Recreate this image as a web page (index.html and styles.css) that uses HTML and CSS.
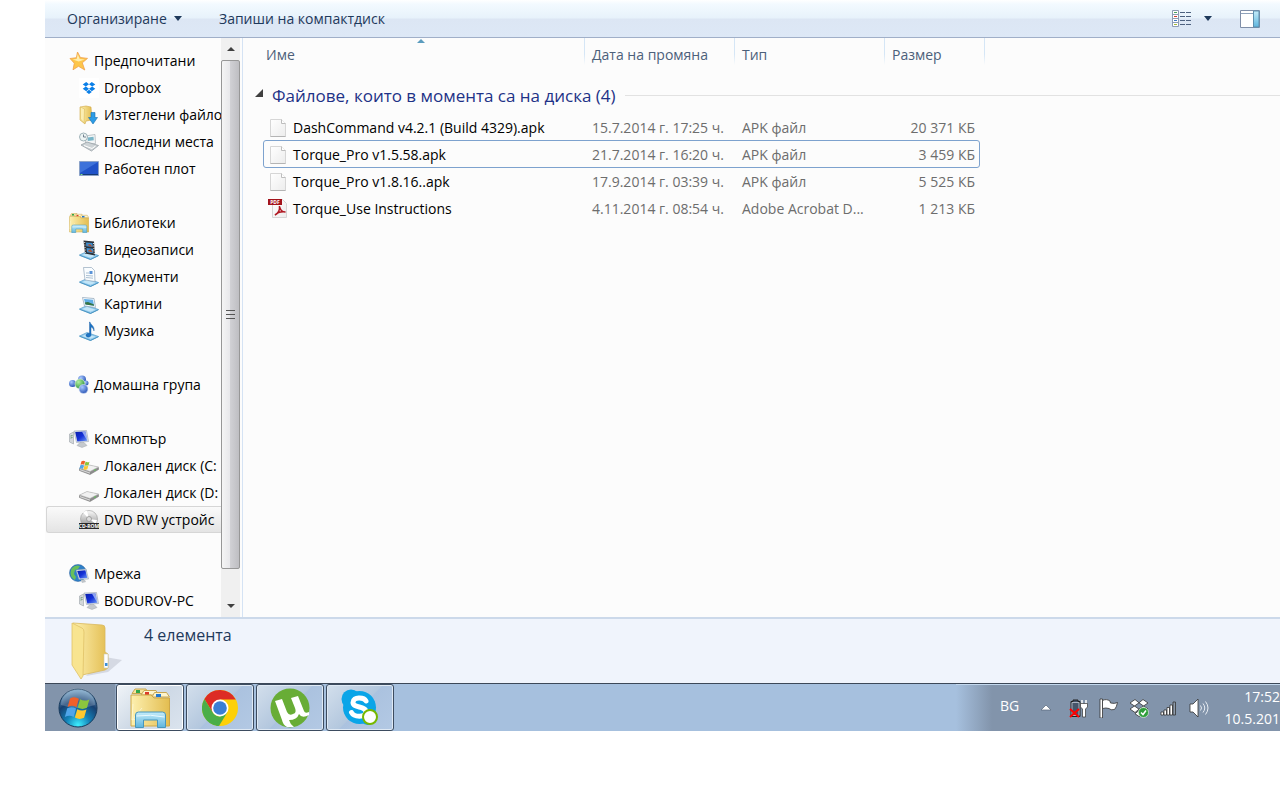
FILE: index.html
```html
<!DOCTYPE html>
<html lang="bg">
<head>
  <meta charset="UTF-8">
  <meta name="viewport" content="width=device-width, initial-scale=1.0">
  <title>DVD RW устройство</title>
  <link rel="stylesheet" href="styles.css">
</head>
<body>
  <!-- shared icons -->
  <svg class="defs" aria-hidden="true">
    <defs>
      <linearGradient id="gold" x1="0" x2="1"><stop offset="0" stop-color="#fdf0b0"/><stop offset="1" stop-color="#e3bd50"/></linearGradient>
      <linearGradient id="screen-blue" x1="0" y1="0" x2="1" y2="1"><stop offset="0" stop-color="#0a1fa8"/><stop offset="0.5" stop-color="#1430d8"/><stop offset="1" stop-color="#6f9cf5"/></linearGradient>
      <linearGradient id="glass" x1="0" y1="0" x2="0" y2="1"><stop offset="0" stop-color="#c5ecfa"/><stop offset="1" stop-color="#5eb5dd"/></linearGradient>
      <linearGradient id="paper" x1="0" y1="0" x2="1" y2="1"><stop offset="0" stop-color="#ffffff"/><stop offset="1" stop-color="#ececec"/></linearGradient>
      <linearGradient id="metal" x1="0" y1="0" x2="0" y2="1"><stop offset="0" stop-color="#fafafa"/><stop offset="1" stop-color="#8c8c8c"/></linearGradient>
      <radialGradient id="orb" cx="0.5" cy="0.95" r="0.9"><stop offset="0" stop-color="#3ff0ff"/><stop offset="0.35" stop-color="#1382b8"/><stop offset="0.7" stop-color="#173f70"/><stop offset="1" stop-color="#6f9cc0"/></radialGradient>
      <radialGradient id="ball-blue" cx="0.35" cy="0.3" r="0.8"><stop offset="0" stop-color="#a9c8ff"/><stop offset="1" stop-color="#1e4bb0"/></radialGradient>
      <radialGradient id="ball-green" cx="0.35" cy="0.3" r="0.8"><stop offset="0" stop-color="#b4f0a0"/><stop offset="1" stop-color="#1d8a35"/></radialGradient>
    </defs>
    <symbol id="file" viewBox="0 0 20 20">
      <path d="M2.500 1.500h11l4 4v13h-15z" fill="url(#paper)" stroke="#d6d6d6"/>
      <path d="M13.500 1.500v4h4" fill="#fff" stroke="#bdbdbd"/>
      <path d="M2.500 18.500h15" stroke="#b4b4b4"/>
    </symbol>
    <symbol id="tray-base" viewBox="0 0 20 20">
      <path d="M0.500 15 8 11.500l11.500 4-8 4z" fill="#8fc8ec" stroke="#5a9fcb" stroke-width="0.700"/>
      <path d="M3 15l5-2 8.500 2.700-5 2z" fill="#c3e6f8"/>
      <path d="M0.500 15.300l11 4.200 8-3.800" fill="none" stroke="#3e8ebe" stroke-width="0.800"/>
    </symbol>
    <symbol id="computer" viewBox="0 0 20 20">
      <path d="M0.500 5l4-2v12l-4-2z" fill="#d3d7da" stroke="#9ca3aa" stroke-width="0.600"/>
      <path d="M1.500 7l2-.5M1.500 9l2-.5" stroke="#4c8a56" stroke-width="0.800"/>
      <path d="M5 2 17.500 1.500l2 11-12 1z" fill="#dfe5ec" stroke="#98a3b0" stroke-width="0.600"/>
      <path d="M6.200 3l10.300-.5 1.800 9.200-10 .8z" fill="url(#screen-blue)"/>
      <path d="M13 2.700l3.500-.2 1.800 9.200z" fill="#b7caf8" opacity="0.750"/>
      <path d="M11 13.500h4l3 3-5 2-5-2z" fill="#c5c9cd" stroke="#a2a6aa" stroke-width="0.500"/>
    </symbol>
    <symbol id="disk" viewBox="0 0 20 20">
      <path d="M0.500 12.500 8 9l11.500 2.500v2L11 18.500.5 14.500z" fill="#8d8d8d" stroke="#7a7a7a" stroke-width="0.600"/>
      <path d="M0.500 12 8 8.500l11.500 2.500-8.500 4.500z" fill="#f1f1f1" stroke="#b4b4b4" stroke-width="0.600"/>
      <path d="M1 13l10 3.500v1.200l-10-3.500z" fill="#d5d5d5"/>
      <circle cx="16" cy="14" r="0.800" fill="#54d14c"/>
    </symbol>
    <symbol id="windows-flag" viewBox="0 0 24 24">
      <path d="M5 4.500c2.500-1.500 4.800-1.300 7.300.2l-2 7c-2.500-1.500-4.800-1.400-7.300-.1z" fill="#f0602a"/>
      <path d="M13.300 5.200c2.500 1.400 4.800 1.500 7.700.1l-2 7c-2.800 1.300-5 1.200-7.600-.2z" fill="#8cc63e"/>
      <path d="M2.700 12.700c2.500-1.400 4.900-1.300 7.300.2l-2 6.900c-2.500-1.500-4.800-1.300-7.300 0z" fill="#50a5ea"/>
      <path d="M11 13.400c2.500 1.400 4.900 1.500 7.600.2l-2 6.900c-2.700 1.300-5 1.200-7.600-.2z" fill="#fdc82f"/>
    </symbol>
    <symbol id="explorer" viewBox="0 0 40 40">
      <path d="M2 5.500 5 1h11l2 4.500z" fill="#f7e49e" stroke="#c9a752"/>
      <path d="M11 7l3-4.500h12L28 7z" fill="#fdf4cd" stroke="#c9a752"/>
      <path d="M22 9l2.500-4.500h12l3 4.500z" fill="#fdf4cd" stroke="#c9a752"/>
      <path d="M6 2h4v3H6z" fill="#30a64a"/><path d="M15 4h4v3h-4z" fill="#dd3a28"/><path d="M26 6h5v3h-5z" fill="#2378d0"/>
      <path d="M1 7h20l3 3h15.500v28H1z" fill="url(#gold)" stroke="#cda849"/>
      <path d="M2 32 12 20M2 32l16-4M2 32l1-16" stroke="#fffbe0" opacity="0.700"/>
      <path d="M5.500 39.500V27a3 3 0 0 1 3-3h24a3 3 0 0 1 3 3v12.500h-8V32h-14v7.500z" fill="url(#glass)" stroke="#4796bd"/>
      <path d="M6.500 28q14-2 28 1" stroke="#e9faff" fill="none"/>
    </symbol>
    <symbol id="dropbox" viewBox="0 0 20 20">
      <path d="M6 1.500 1 5l4.500 3L10 4.800zM14 1.500 10 4.800 14.500 8 19 5zM1 11l5 3.500 4-3.300L5.500 8zM19 11l-5 3.500-4-3.300L14.500 8zM10 12.500l-4 3.200 4 2.800 4-2.800z"/>
    </symbol>
  </svg>

  <div class="desktop">
    <header class="toolbar">
      <button class="tool organize">Организиране <span class="caret"></span></button>
      <button class="tool">Запиши на компактдиск</button>
      <div class="tool-icons">
        <button class="icon-btn" aria-label="Изглед">
          <svg width="20" height="17" viewBox="0 0 20 17">
            <path d="M.5.5h6v16h-6z" fill="#fff" stroke="#8d9bb3"/>
            <path d="M0 4.500h7M0 8.500h7M0 12.500h7" stroke="#8d9bb3"/>
            <path d="M2 2.500h3" stroke="#4aa35c"/><path d="M2 6.500h3" stroke="#cf3b30"/><path d="M2 10.500h3" stroke="#3e79c4"/><path d="M2 14.500h3" stroke="#a5b93a"/>
            <path d="M8 2.500h5m1 0h5M8 6.500h5m1 0h5M8 10.500h5m1 0h5M8 14.500h5m1 0h5" stroke="#4d617f"/>
          </svg>
        </button>
        <button class="icon-btn" aria-label="Още опции"><span class="caret big"></span></button>
        <button class="icon-btn pane" aria-label="Визуализация">
          <svg width="20" height="18" viewBox="0 0 20 18">
            <path d="M.5.5h19v17H.5z" fill="#fff" stroke="#7f8ea8"/>
            <path d="M1 3.500h12" stroke="#8fa2bb"/>
            <path d="M13.500 1h5.500v16h-5.500z" fill="url(#glass)" stroke="#5d8fae"/>
          </svg>
        </button>
      </div>
    </header>

    <div class="content">
      <nav class="sidebar">
        <div class="tree">
          <div class="group">
            <a href="#" class="root"><svg viewBox="0 0 20 20"><path d="M8.500 1l2.900 5.500 7.100.9-5.200 4.400 2.500 7.200-6.300-3.700-5.500 3.500 1.300-6.600L1 7.500l6.400-.8z" fill="#fdc64a" stroke="#f0a04a" stroke-width="0.800"/><path d="M8.700 3l2 5 5 .5-6 2-6-2 4-.5z" fill="#ffeeb0"/></svg>Предпочитани</a>
            <a href="#"><svg viewBox="0 0 20 20" fill="#0a7fe8"><path fill="#fff" d="M0 0h20v20H0z"/><use href="#dropbox" x="3" y="3" width="14" height="14"/></svg>Dropbox</a>
            <a href="#"><svg viewBox="0 0 20 20"><path d="M1 2l6-1 5 1 1 13-6 1-1 3-5-4z" fill="url(#gold)" stroke="#d1a844" stroke-width="0.600"/><path d="M1.500 2l4 2-.5 14-3.500-4z" fill="#fbeeb2" stroke="#d8b552" stroke-width="0.500"/><path d="M12 7.500h4v5h2.500L14 19l-4.500-6.500H12z" fill="#2b9be6" stroke="#1770b0" stroke-width="0.600"/></svg>Изтеглени файло</a>
            <a href="#"><svg viewBox="0 0 20 20"><path d="M6 4l10-1.500.5 9L7 13z" fill="#f3f6f7" stroke="#a6afb4" stroke-width="0.700"/><path d="M8.500 5.500l6-.8.3 3.500-6 .8z" fill="#79b5c8"/><path d="M2 13l6-3 11.500 3.500-7 5.500z" fill="#cdd3d6" stroke="#8d979c" stroke-width="0.700"/><path d="M5 13.500l8 3 3.500-2.500" fill="none" stroke="#fff"/><circle cx="4.500" cy="5" r="4" fill="#edf4f4" stroke="#9fb2b8"/><path d="M4.500 2.500V5H7" fill="none" stroke="#567" stroke-width="0.800"/></svg>Последни места</a>
            <a href="#"><svg viewBox="0 0 20 20"><path d="M.5 2.500h19v14H.5z" fill="#2052c8" stroke="#8ba2c8"/><path d="M1 3h18L1 14z" fill="#3d72da"/><path d="M1 15.500h18" stroke="#163a75" stroke-width="1"/><path d="M1.500 15.500h2" stroke="#7be08a"/></svg>Работен плот</a>
          </div>
          <div class="group">
            <a href="#" class="root"><svg viewBox="0 0 20 20"><use href="#explorer"/></svg>Библиотеки</a>
            <a href="#"><svg viewBox="0 0 20 20"><use href="#tray-base"/><path d="M4.500.5 15 1.500l1 14-10-2z" fill="#2d3238"/><path d="M7 2.500l6.500.6.3 4-6.500-.8zM7.500 8l6.500.8.3 4.500-6.300-1z" fill="#3e8fd0"/><path d="M8 5l3-1 3 3zM8.500 11l3-2 2.500 3.500z" fill="#b5522e"/><path d="M5.700 2l.6 11M14.500 3l.8 11" stroke="#eee" stroke-dasharray="1 1.500"/></svg>Видеозаписи</a>
            <a href="#"><svg viewBox="0 0 20 20"><use href="#tray-base"/><path d="M4.500.5h8l3 3 .5 11-10-1.500z" fill="#fafdff" stroke="#93a7bb" stroke-width="0.700"/><path d="M7 6h3M7 8.500l7 .5M7 10.500l7 .7" stroke="#8aa5bd" stroke-width="0.700"/><path d="M10.500 4h3v3h-3z" fill="#5b93d8"/></svg>Документи</a>
            <a href="#"><svg viewBox="0 0 20 20"><use href="#tray-base"/><path d="M3.500 3.500 15 4.500l1.500 9-11-1.500z" fill="#f5fbff" stroke="#8aa1b5" stroke-width="0.700"/><path d="M5 5l9 .8 1 6-8.500-1.200z" fill="#60aee8"/><path d="M5.800 8.500 9 8l6 2.500v1.300l-8.500-1.200z" fill="#367443"/></svg>Картини</a>
            <a href="#"><svg viewBox="0 0 20 20"><use href="#tray-base"/><path d="M11 1c.5 3 5 4 4 9-.5-3-2-3.500-3-4v8.500c-1 2.500-5.500 2-5-.5.500-1.500 2-2 3.500-1.500V1z" fill="#1e74c4" stroke="#1559a0" stroke-width="0.400"/></svg>Музика</a>
          </div>
          <div class="group">
            <a href="#" class="root"><svg viewBox="0 0 20 20"><circle cx="3.500" cy="8.500" r="3.500" fill="url(#ball-blue)"/><circle cx="13" cy="4.500" r="4" fill="url(#ball-blue)"/><circle cx="17" cy="8" r="2.500" fill="url(#ball-blue)"/><circle cx="11" cy="9" r="5" fill="url(#ball-green)" stroke="#e9f3e9" stroke-width="0.600"/><circle cx="14.500" cy="14" r="4.500" fill="url(#ball-blue)" stroke="#dfe8fa" stroke-width="0.600"/></svg>Домашна група</a>
          </div>
          <div class="group">
            <a href="#" class="root"><svg viewBox="0 0 20 20"><use href="#computer"/></svg>Компютър</a>
            <a href="#"><svg viewBox="0 0 20 20"><use href="#disk"/><use href="#windows-flag" x="0" y="3" width="12" height="12"/></svg>Локален диск (C:</a>
            <a href="#"><svg viewBox="0 0 20 20"><use href="#disk"/></svg>Локален диск (D:</a>
            <a href="#" class="selected"><svg viewBox="0 0 20 20"><circle cx="10" cy="9" r="8.500" fill="url(#metal)" stroke="#9a9a9a" stroke-width="0.600"/><path d="M10 9 4 2.500A9 9 0 0 1 8 .8zM10 9l7 5 1-4z" fill="#fff"/><circle cx="10" cy="9" r="2.500" fill="#ddd" stroke="#888" stroke-width="0.700"/><path d="M0 13h20v6H0z" fill="#2a2a2a"/><text x="10" y="18" class="cd-label" text-anchor="middle">CD-ROM</text></svg>DVD RW устройс</a>
          </div>
          <div class="group">
            <a href="#" class="root"><svg viewBox="0 0 20 20"><circle cx="9" cy="9" r="8.500" fill="#2e7fc8" stroke="#235d9a" stroke-width="0.500"/><path d="M3 4c3-3 6-3 8-2l-2 3-3 1-1 4 2 3-1 3C2 14 0 9 3 4z" fill="#68bf5a"/><path d="M7 6l10-1 2.500 10-9.500.5z" fill="#dce3ea" stroke="#8999a8" stroke-width="0.500"/><path d="M8.200 7l8.200-.8L18.300 14l-7.500.4z" fill="url(#screen-blue)"/><path d="M12 16h4l1 2-4 1z" fill="#bfc4c8"/></svg>Мрежа</a>
            <a href="#"><svg viewBox="0 0 20 20"><use href="#computer"/></svg>BODUROV-PC</a>
          </div>
        </div>
        <div class="scrollbar">
          <button class="scroll-btn up" aria-label="Нагоре"></button>
          <div class="thumb"><span></span><span></span><span></span></div>
          <button class="scroll-btn down" aria-label="Надолу"></button>
        </div>
      </nav>

      <main class="files">
        <table>
          <colgroup>
            <col class="col-name"><col class="col-date"><col class="col-type"><col class="col-size"><col>
          </colgroup>
          <thead>
            <tr>
              <th class="name sorted">Име</th>
              <th>Дата на промяна</th>
              <th>Тип</th>
              <th>Размер</th>
              <td></td>
            </tr>
          </thead>
          <tbody>
            <tr class="group-row">
              <th colspan="5"><div class="group-title"><span class="expander"></span>Файлове, които в момента са на диска (4)</div></th>
            </tr>
            <tr>
              <td class="name"><svg viewBox="0 0 20 20"><use href="#file"/></svg>DashCommand v4.2.1 (Build 4329).apk</td>
              <td>15.7.2014 г. 17:25 ч.</td>
              <td>APK файл</td>
              <td class="size">20 371 КБ</td>
            </tr>
            <tr class="focused">
              <td class="name"><svg viewBox="0 0 20 20"><use href="#file"/></svg>Torque_Pro v1.5.58.apk</td>
              <td>21.7.2014 г. 16:20 ч.</td>
              <td>APK файл</td>
              <td class="size">3 459 КБ</td>
            </tr>
            <tr>
              <td class="name"><svg viewBox="0 0 20 20"><use href="#file"/></svg>Torque_Pro v1.8.16..apk</td>
              <td>17.9.2014 г. 03:39 ч.</td>
              <td>APK файл</td>
              <td class="size">5 525 КБ</td>
            </tr>
            <tr>
              <td class="name"><svg viewBox="0 0 20 20"><path d="M4.500.5h10l4 4v14h-14z" fill="url(#paper)" stroke="#d6d6d6"/><path d="M0 0h14v6H0z" fill="#a3141c"/><text x="7" y="5" class="pdf-label" text-anchor="middle">PDF</text><path d="M7 16c2-1 5-4 4.500-9 .5 4 2.500 6 6 6-4-.5-8 .5-10.500 3z" fill="none" stroke="#b01822" stroke-width="1.500"/></svg>Torque_Use Instructions</td>
              <td>4.11.2014 г. 08:54 ч.</td>
              <td>Adobe Acrobat D...</td>
              <td class="size">1 213 КБ</td>
            </tr>
          </tbody>
        </table>
      </main>
    </div>

    <section class="details">
      <svg width="54" height="58" viewBox="0 0 54 58">
        <path d="M34 35l17 3-14 12-22 4z" fill="#b9bec9" opacity="0.500"/>
        <path d="M2 1l29 2q3 0 3 3v24l3 2v14l-3 2-23 5z" fill="url(#gold)" stroke="#d9b95e" stroke-width="0.800"/>
        <path d="M33 32h4v14h-4z" fill="#fff" stroke="#c9c9b9" stroke-width="0.600"/><path d="M34 41h2.500v3H34z" fill="#3b8ed8"/>
        <path d="M1 1l10 5q2 1 2 4l-1 44-2 3-9-14z" fill="#f8e490" stroke="#dfc167" stroke-width="0.800"/>
      </svg>
      <p>4 елемента</p>
    </section>

    <footer class="taskbar">
      <button class="start" aria-label="Старт">
        <svg width="40" height="40" viewBox="0 0 40 40"><circle cx="20" cy="20" r="19" fill="url(#orb)" stroke="#173a5c"/><path d="M3 17a17 17 0 0 1 34 0q-17 6-34 0z" fill="#fff" opacity="0.200"/><use href="#windows-flag" x="6" y="5" width="29" height="29"/></svg>
      </button>
      <button class="task active" aria-label="Explorer"><svg width="40" height="40"><use href="#explorer"/></svg></button>
      <button class="task" aria-label="Chrome">
        <svg width="36" height="36" viewBox="0 0 36 36">
          <circle cx="18" cy="18" r="18" fill="#fdd008"/>
          <path d="M18 9.500h15.800A18 18 0 0 0 2.400 9l8.200 13.300z" fill="#dd2c25"/>
          <path d="M2.400 9 10.600 22.300q3 4.500 8 4.200L16 36A18 18 0 0 1 2.400 9z" fill="#4aae48"/>
          <path d="M25.400 22.300 17 36l-3-.5 4-9z" fill="#4aae48"/>
          <circle cx="18" cy="18" r="8.500" fill="#fff"/><circle cx="18" cy="18" r="6.800" fill="#3a7fd5"/>
        </svg>
      </button>
      <button class="task" aria-label="uTorrent">
        <svg width="40" height="40" viewBox="0 0 40 40">
          <circle cx="20" cy="20" r="19.500" fill="#68ad36"/>
          <path d="M5 13l7-2 5 13q2 4 6 2 4-1 2-6L21 10l7-2 6 15q1 3 5 1l0 3q-7 4-10-1-2 6-10 6 1 4 5 7l-7 0q-4-2-5-7z" fill="#fff"/>
        </svg>
      </button>
      <button class="task" aria-label="Skype">
        <svg width="40" height="40" viewBox="0 0 40 40">
          <circle cx="19.500" cy="19.500" r="16.500" fill="#0aa5e8"/><circle cx="11" cy="11" r="9.500" fill="#0aa5e8"/><circle cx="28" cy="28" r="9" fill="#0aa5e8"/>
          <path d="M26 13c-2-4-13-4.500-13 1.500 0 6 13 3 13 9.500 0 5.500-12 5.500-14.500.5" fill="none" stroke="#fff" stroke-width="5" stroke-linecap="round"/>
          <circle cx="30" cy="29" r="7" fill="#fff" stroke="#77b800" stroke-width="2"/>
        </svg>
      </button>
      <div class="tray">
        <span class="lang">BG</span>
        <div class="tray-icons">
          <svg viewBox="0 0 20 20"><path d="M2 12l5-5 5 5z" fill="#fff" stroke="#56657a" stroke-width="0.700"/></svg>
          <svg viewBox="0 0 20 20"><path d="M2 3.500h2V2h5v1.500h2v15H2z" fill="#46556a" stroke="#222"/><path d="M3 4.500h7v13H3z" fill="none" stroke="#aab4c0"/><path d="M13 2v4M17 2v4" stroke="#fff" stroke-width="1.500"/><path d="M11.500 5.500h7V9l-2 2v8h-3v-8l-2-2z" fill="#fff" stroke="#333" stroke-width="0.700"/><path d="M1 11l9 8M10 11l-9 8" stroke="#f00" stroke-width="2"/></svg>
          <svg viewBox="0 0 20 20"><path d="M1 1h2.500v19H1z" fill="#fff" stroke="#333" stroke-width="0.800"/><path d="M3.500 2.500c3-1.500 5-1 7.500.5l.5 2q4 1 7-.500-1 5-3 7-4 1-5.500-1-3-1-6.500 0z" fill="#fff" stroke="#333" stroke-width="0.800"/></svg>
          <svg viewBox="0 0 20 20"><use href="#dropbox" fill="#fff" stroke="#333" stroke-width="0.800"/><circle cx="14.500" cy="14.500" r="5" fill="#2f9e3a" stroke="#dff0df" stroke-width="0.700"/><path d="M12 14.500l2 2 3-4" fill="none" stroke="#fff" stroke-width="1.500"/></svg>
          <svg viewBox="0 0 20 20"><g fill="#fff" stroke="#333" stroke-width="0.800"><path d="M2 14h2.500v3H2zM5 12h2.500v5H5zM8 9.500h2.500V17H8zM11 7h2.500v10H11z"/><path d="M14 4h2.500v13H14z" fill="#8d9aaa"/></g></svg>
          <svg viewBox="0 0 20 20"><path d="M1 6h3l5-5v18l-5-5H1z" fill="#fff" stroke="#333" stroke-width="0.800"/><path d="M11.500 7.500q2 2.500 0 5M14 5.500q3.500 4.500 0 9M16.500 3.500q5 6.500 0 13" fill="none" stroke="#e8edf3"/></svg>
        </div>
        <div class="clock"><time>17:52</time><span>10.5.201</span></div>
      </div>
    </footer>
  </div>
</body>
</html>
```
FILE: styles.css
```css
*,
*::before,
*::after {
  box-sizing: border-box;
}

body {
  margin: 0;
  background: #fff;
  color: #000;
  font-family: "Open Sans", "Noto Sans", sans-serif;
  font-size: 14px;
  line-height: 27px;
}

button {
  font: inherit;
  color: inherit;
  background: none;
  border: none;
  padding: 0;
  margin: 0;
}

svg {
  flex: none;
  display: block;
}

.defs {
  position: absolute;
  width: 0;
  height: 0;
}

.desktop {
  margin-left: 45px;
  overflow: hidden;
}

/* toolbar */
.toolbar {
  display: flex;
  align-items: center;
  height: 38px;
  padding: 0 20px 0 22px;
  border-bottom: 1px solid #a0afc8;
  background: linear-gradient(#fff, #f3faff 4px, #e7f2fb 18px, #dce6f4 19px, #dde8f6 36px);
  color: #1e395b;
}

.organize {
  width: 152px;
  display: flex;
  align-items: center;
  gap: 7px;
}

.caret {
  border: 4px solid transparent;
  border-top: 5px solid #1e395b;
  border-bottom: none;
}

.caret.big {
  display: block;
}

.tool-icons {
  display: flex;
  align-items: center;
  gap: 12px;
  margin-left: auto;
}

.pane {
  margin-left: 16px;
}

/* content */
.content {
  display: flex;
  background: #fcfcfc;
}

.sidebar {
  display: flex;
  flex: none;
  width: 198px;
  border-right: 1px solid #d5e3f4;
}

.tree {
  flex: 1;
  min-width: 0;
  padding: 9px 0 3px 1px;
}

.group + .group {
  margin-top: 27px;
}

.tree a {
  display: flex;
  align-items: center;
  gap: 5px;
  height: 27px;
  padding-left: 33px;
  border-radius: 3px 0 0 3px;
  color: #000;
  text-decoration: none;
  white-space: nowrap;
  overflow: hidden;
}

.tree a.root {
  padding-left: 23px;
}

.tree a.selected {
  padding-left: 32px;
  border: 1px solid #d6d6d6;
  border-right: none;
  background: linear-gradient(#fafafa, #e4e4e4);
}

.tree svg,
.name svg,
.tray-icons svg {
  width: 20px;
  height: 20px;
}

.cd-label,
.pdf-label {
  font-size: 5px;
  font-weight: bold;
  fill: #fff;
}

.scrollbar {
  display: flex;
  flex-direction: column;
  width: 19px;
  margin-right: 2px;
  background: #f0f0f0;
}

.scroll-btn {
  display: flex;
  align-items: center;
  justify-content: center;
  height: 22px;
}

.scroll-btn::after {
  content: "";
  border: 4px solid transparent;
}

.up::after {
  border-top: none;
  border-bottom-color: #404040;
}

.down::after {
  border-bottom: none;
  border-top-color: #404040;
}

.thumb {
  display: flex;
  flex: 1;
  flex-direction: column;
  align-items: center;
  justify-content: center;
  gap: 2px;
  margin-bottom: 26px;
  border: 1px solid #979797;
  border-radius: 2px;
  background: linear-gradient(90deg, #f5f5f5, #e8e8eb 45%, #d0d0d4 50%, #bebec2);
}

.thumb span {
  width: 9px;
  height: 2px;
  border-top: 1px solid #555;
}

/* file list */
.files {
  flex: 1;
  min-width: 0;
}

table {
  width: 100%;
  table-layout: fixed;
  border-collapse: collapse;
}

.col-name {
  width: 342px;
}

.col-date,
.col-type {
  width: 150px;
}

.col-size {
  width: 100px;
}

th,
td {
  padding: 0 0 0 7px;
  font-weight: normal;
  text-align: left;
  white-space: nowrap;
}

thead th {
  position: relative;
  height: 34px;
  padding-bottom: 2px;
  color: #4c607a;
}

thead th.name {
  padding-left: 23px;
}

thead th::after {
  content: "";
  position: absolute;
  top: 0;
  right: 0;
  width: 1px;
  height: 27px;
  background: linear-gradient(#d5e6f6, #d5e6f6 60%, #fcfcfc);
}

.sorted::before {
  content: "";
  position: absolute;
  top: 1px;
  left: 174px;
  border: 4px solid transparent;
  border-top: none;
  border-bottom-color: #5b9cbe;
}

.group-row th {
  padding: 0 0 0 12px;
}

.group-title {
  display: flex;
  align-items: center;
  height: 42px;
  padding-top: 4px;
  color: #1e3287;
  font-size: 17px;
}

.group-title::after {
  content: "";
  flex: 1;
  height: 1px;
  margin-left: 9px;
  background: #e2e2e2;
}

.expander {
  margin: 0 9px 4px 0;
  border-left: 8px solid transparent;
  border-bottom: 8px solid #404040;
}

tbody td {
  height: 27px;
  color: #6d6d6d;
}

td.name {
  display: flex;
  align-items: center;
  gap: 5px;
  padding-left: 25px;
  color: #000;
}

td.size {
  padding-right: 10px;
  text-align: right;
}

.focused {
  position: relative;
}

.focused::after {
  content: "";
  position: absolute;
  top: -1px;
  left: 20px;
  width: 717px;
  height: 28px;
  border: 1px solid #7da2ce;
  border-radius: 3px;
}

/* details pane */
.details {
  display: flex;
  gap: 19px;
  height: 66px;
  padding: 3px 0 0 26px;
  border-top: 2px solid #ccd9ea;
  background: #f0f4fc;
  color: #1e395b;
  font-size: 16px;
}

.details p {
  margin: 0;
}

/* taskbar */
.taskbar {
  display: flex;
  gap: 2px;
  height: 48px;
  border-top: 1px solid #3c4858;
  background: linear-gradient(90deg, #8294ab 70px, #a6c0de 71px);
}

.start {
  width: 69px;
  padding-left: 13px;
}

.task {
  display: flex;
  align-items: center;
  justify-content: center;
  width: 68px;
  border: 1px solid #3d4c60;
  border-radius: 3px;
  background: linear-gradient(135deg, #d3dfec, #b3c7de 50%, #abc2df 51%, #b3c9e4);
  box-shadow: inset 0 0 0 1px #dfe9f4;
}

.task.active {
  background: linear-gradient(135deg, #f0f4f8, #ced9e6 50%, #dbe4ee);
  box-shadow: inset 0 0 0 1px #fff;
}

.tray {
  display: flex;
  align-items: center;
  margin-left: auto;
  padding-left: 44px;
  border-top: 1px solid #c3d8ee;
  background: linear-gradient(90deg, #a6c0de, #8294ab 36px);
  color: #fff;
}

.lang {
  width: 39px;
  padding-bottom: 6px;
}

.tray-icons {
  display: flex;
  gap: 10px;
  margin-right: 15px;
}

.clock {
  display: flex;
  flex-direction: column;
  align-items: flex-end;
  width: 56px;
  line-height: 22px;
  white-space: nowrap;
}
```
